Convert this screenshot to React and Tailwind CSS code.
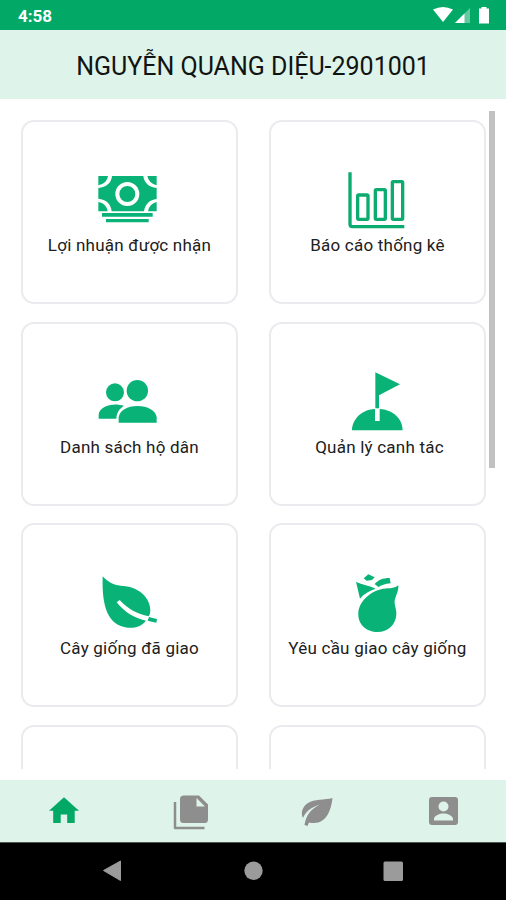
const GREEN = '#09b378';

function Money() {
  return (
    <svg className="h-[66px] w-[65px]" viewBox="51 30 195 198" fill={GREEN}>
      <path d="M96 48H190C192 68 207 82 230 84V117C209 119 195 132 192 154H95C93 132 78 118 55 116V84C79 82 94 69 96 48Z" />
      <path d="M55 48H84Q81 71 55 76ZM202 48H230V76Q207 71 202 48ZM55 126Q79 130 83 154H55ZM230 126V154H204Q208 131 230 126Z" />
      <circle cx="142" cy="102" r="30" fill="none" stroke="#fff" strokeWidth="12" />
      <path d="M66 159H218V170H66ZM78 177H206V187H78Z" />
    </svg>
  );
}

function Chart() {
  return (
    <svg className="h-[66px] w-[65px]" viewBox="45 30 195 198" fill="none" stroke="#0cab70" strokeWidth="10">
      <path d="M60 37V193Q60 200 67 200H223" />
      <rect x="83" y="105" width="31" height="73" rx="3" />
      <rect x="136" y="89" width="30" height="89" rx="3" />
      <rect x="187" y="65" width="31" height="113" rx="3" />
    </svg>
  );
}

function People() {
  return (
    <svg className="h-[66px] w-[65px]" viewBox="51 21 195 198" fill={GREEN}>
      <circle cx="105" cy="82" r="27" />
      <circle cx="172" cy="77" r="32" />
      <path d="M56 161V150C57 128 85 117 115 119Q126 120 132 122C118 131 110 142 109 161Z" />
      <path d="M116 173V157C118 137 142 123 172 123C203 123 228 137 230 157V173Z" />
    </svg>
  );
}

function Flag() {
  return (
    <svg className="h-[66px] w-[65px]" viewBox="45 21 195 198" fill={GREEN}>
      <path d="M136 22L210 58L147 91V130H136Z" />
      <path d="M66 196C67 160 98 133 135 132V168H149V132C188 134 218 160 218 196Z" />
    </svg>
  );
}

function Leaf() {
  return (
    <svg className="h-[66px] w-[65px]" viewBox="51 24 195 198" fill={GREEN}>
      <path d="M68 34C86 53 100 60 122 62C175 63 212 98 211 137Q211 145 206 154C172 147 144 132 119 105L110 112C133 141 163 160 198 167C184 184 165 190 143 188C84 182 65 126 68 34Z" />
      <path d="M207 156Q217 159 231 162L229 173Q215 170 203 167Z" />
    </svg>
  );
}

function Seedling() {
  return (
    <svg className="h-[66px] w-[65px]" viewBox="45 24 195 198" fill={GREEN}>
      <path d="M115 28L134 37L126 45L110 47L101 40Z" />
      <path d="M134 57C145 45 157 39 179 39L182 55C164 57 154 61 145 66Z" />
      <path d="M78 50C93 58 115 60 137 71C118 77 102 86 90 101Z" />
      <path d="M205 61C207 83 192 97 194 116C196 128 200 136 199 149C197 180 173 201 143 201C109 201 83 178 85 144C87 102 137 66 182 70Q197 69 205 61Z" />
    </svg>
  );
}

const cards = [
  { label: 'Lợi nhuận được nhận', Icon: Money },
  { label: 'Báo cáo thống kê', Icon: Chart },
  { label: 'Danh sách hộ dân', Icon: People },
  { label: 'Quản lý canh tác', Icon: Flag, labelClass: 'pl-[4px]' },
  { label: 'Cây giống đã giao', Icon: Leaf },
  { label: 'Yêu cầu giao cây giống', Icon: Seedling },
  { label: '' },
  { label: '' },
];

function Card({ label, Icon, labelClass = '' }) {
  return (
    <div className="flex h-[184px] flex-col items-center rounded-[13px] border-2 border-[#ebebef] bg-white pt-[48px]">
      {Icon && <Icon />}
      <span className={`whitespace-nowrap text-[17px] leading-[19px] tracking-[0.22px] text-[#202020] ${labelClass}`}>{label}</span>
    </div>
  );
}

export default function App() {
  return (
    <div className="flex h-[900px] w-[506px] flex-col overflow-hidden bg-white font-[Roboto,sans-serif]">
      <div className="flex h-[30px] shrink-0 items-center justify-between bg-[#02a966] pl-[18px] pr-[15px] text-white">
        <span className="pt-[2px] text-[17px] font-bold leading-5">4:58</span>
        <svg className="h-[30px] w-[58px]" viewBox="433 0 58 30" fill="#fff">
          <path d="M433 9.5Q443 4.500 453 9.500L443 22Z" />
          <path d="M470 8V23H455Z" opacity=".38" />
          <path d="M464.500 13.500V23H455Z" />
          <path d="M481.500 7h5v1.500H489V23.500H479V8.500H481.500Z" />
        </svg>
      </div>
      <header className="flex h-[69px] shrink-0 items-center justify-center bg-[#def3e9] pt-[4px]">
        <h1 className="whitespace-nowrap text-[25px] leading-8 text-[#101412]">NGUYỄN QUANG DIỆU-2901001</h1>
      </header>
      <main className="flex h-[670px] shrink-0 overflow-hidden pl-[21px] pt-[12px]">
        <div className="grid w-[465px] shrink-0 auto-rows-[184px] grid-cols-2 gap-x-[31px] gap-y-[17.700px] pt-[9px]">
          {cards.map((card, i) => (
            <Card key={i} {...card} />
          ))}
        </div>
        <div className="ml-[3px] h-[357px] w-[6px] bg-[#c1c1c1]" />
      </main>
      <div className="h-[11px] shrink-0 bg-white" />
      <nav className="h-[62px] shrink-0 bg-[#def3e9]">
        <svg className="h-[62px] w-[506px]" viewBox="0 780 506 62" fill="#8e8e8e">
          <path fill="#02a966" d="M64 797.300L79 810.800H74.700V823H67.200V814.500H60.700V823H53.200V810.800H49Z" />
          <path d="M184 795.500H199L208 804.500V819.500Q208 823 204.500 823H183.500Q180 823 180 819.500V799Q180 795.500 184 795.500ZM196.500 798V806.500H205Z" fillRule="evenodd" />
          <path d="M175 802V828H204.500" fill="none" stroke="#8e8e8e" strokeWidth="2.500" strokeLinejoin="round" />
          <path d="M332.500 798C325 800 314 799 308 803C302 807 300.500 813 303 818C306 811 312 807 320 804.500C311 809 306 815 304.500 825L307.500 826L309 822.500C326 826 331 811 332.500 798Z" />
          <path fillRule="evenodd" d="M432 797H455Q458 797 458 800V822Q458 825 455 825H432Q429 825 429 822V800Q429 797 432 797ZM443.500 801.500A5 5 0 1 0 443.500 811.500A5 5 0 1 0 443.500 801.500ZM434 820.500H453V819C453 815.500 447 813.500 443.500 813.500C440 813.500 434 815.500 434 819Z" />
        </svg>
      </nav>
      <footer className="h-[58px] shrink-0 border-t border-[#4d5852] bg-black">
        <svg className="h-[57px] w-[506px]" viewBox="0 843 506 57" fill="#9b9b9b">
          <path d="M103.500 870.500L120.500 861V880.500Z" stroke="#9b9b9b" strokeLinejoin="round" />
          <circle cx="253.500" cy="870.700" r="9.200" />
          <rect x="383.500" y="861.500" width="19.500" height="19.500" rx="1.500" />
        </svg>
      </footer>
    </div>
  );
}
